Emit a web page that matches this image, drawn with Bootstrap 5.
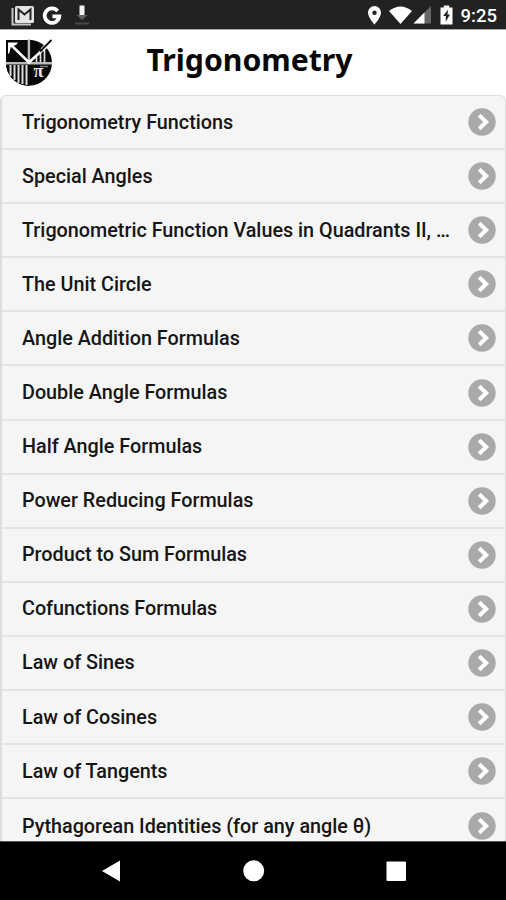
<!DOCTYPE html>
<html lang="en">
<head>
<meta charset="utf-8">
<meta name="viewport" content="width=device-width, initial-scale=1">
<title>Trigonometry</title>
<link href="https://cdn.jsdelivr.net/npm/bootstrap@5.3.0/dist/css/bootstrap.min.css" rel="stylesheet">
<style>
body{font-family:Roboto,"Liberation Sans",sans-serif;color:#161616}
svg{display:block;flex:none}
.screen{height:900px;width:506px}
.status{height:30px;background:#222;border-bottom:1px solid #aaa}
.clock{font-size:18.5px;font-weight:500;line-height:28px;padding:2px 9px 0 5px}
.app-head{height:65px;padding-left:5px}
.app-title{font-family:"Noto Sans",sans-serif;font-weight:700;font-size:30.2px;line-height:40px;padding:0 60px 5px 0;color:#080808}
.topics{border:1px solid #ddd;border-left:2px solid #ddd;border-bottom:0;border-radius:6px 6px 0 0;background:#f5f5f5;min-height:0}
.topics .topic{height:54.1px;padding:0 9px 0 20px;background:#f5f5f5;border:0;border-bottom:2px solid #e4e4e4;border-radius:0;color:#161616;font-size:19.77px;font-weight:500;line-height:28px}
.topic .label{width:434px;padding-top:1px}
.softkeys{height:59px;background:#000;border-top:1px solid #555}
</style>
<script src="https://cdn.jsdelivr.net/npm/bootstrap@5.3.0/dist/js/bootstrap.bundle.min.js"></script>
</head>
<body class="bg-white overflow-hidden">
<svg width="0" height="0" class="position-absolute"><symbol id="go" viewBox="0 0 28 28"><circle cx="14" cy="14" r="13.7" fill="#a9a9a9"/><path d="M11.2 7.2 18.2 14l-7 6.8" fill="none" stroke="#fff" stroke-width="4"/></symbol></svg>
<div class="screen d-flex flex-column overflow-hidden">
  <div class="status d-flex justify-content-between text-white flex-shrink-0">
    <svg width="100" height="29" viewBox="0 0 100 29">
      <path d="M12.5 8v16.5H31" fill="none" stroke="#c4c4c4" stroke-width="2"/>
      <rect x="15" y="6" width="19" height="17" rx="1.5" fill="#e4e4e4"/>
      <path d="M18.5 20V9.5l6 5 6-5V20" fill="none" stroke="#222" stroke-width="2"/>
      <path d="M57.700 11A7.300 7.300 0 1 0 59.300 16.300H52.500" fill="none" stroke="#fff" stroke-width="3.800"/>
      <path d="M79.5 5.500h5V15h-5z" fill="#f4f4f4"/><path d="M76.500 15h11L82 20z" fill="#626262"/><path d="M75 23.500h14" stroke="#484848" stroke-width="2"/>
    </svg>
    <div class="d-flex">
      <svg width="94" height="29" viewBox="363.500 0 94 29">
        <path fill="#fff" fill-rule="evenodd" d="M376 6a6.500 6.500 0 0 0-6.500 6.500c0 5 6.500 12 6.500 12s6.500-7 6.500-12A6.500 6.500 0 0 0 376 6zm0 4.500a2.200 2.200 0 1 1 0 4.400 2.200 2.200 0 0 1 0-4.400z"/>
        <path d="M390.500 11q11.500-9 23 0L402 24z" fill="#fff"/>
        <path d="M415 23.500 432.500 6v17.500z" fill="#666"/><path d="M415 23.500 426 12.500v11z" fill="#fff"/>
        <path d="M442 7.500h3.300V5.500h5.400v2h3.300v17h-12z" fill="#fff"/><path d="M449.500 9.500 444.700 16h2.600v5.500l4.200-7H449z" fill="#222"/>
      </svg>
      <div class="clock">9:25</div>
    </div>
  </div>
  <header class="app-head d-flex align-items-center flex-shrink-0">
    <svg width="48" height="50" viewBox="5 37 48 50">
      <path d="M6 39h22.500v46A23 23 0 0 1 6 62z" fill="#090909"/>
      <circle cx="29" cy="61.800" r="23" fill="#090909"/>
      <g stroke="#ddd" stroke-width="2"><path d="M10.500 64v11M14.500 64v15M18.500 64v18M22.500 64v19M26.500 64v20"/><path d="M36.500 56v5M40.500 52v9M44.500 49v12" stroke-width="1.700"/></g>
      <path d="M28.900 39v23M6 62.200h46" stroke="#bbb" stroke-width="2.400"/>
      <path d="M10 43l19 18.500 13-12" fill="none" stroke="#fff" stroke-width="2.600"/>
      <path d="M8 41.500h10L16 44l-5 1.500-2 7.500-1-1z" fill="#fff"/>
      <path d="M42 49 51.500 39.500" stroke="#fff" stroke-width="4"/><path d="M40 50.500 51.500 39" stroke="#111" stroke-width="2"/>
      <text x="33.500" y="76" font-family="Liberation Serif,serif" font-size="18" font-weight="bold" fill="#e6e6e6">π</text>
      <path d="M40 65.500h8" stroke="#777" stroke-width="1.500"/>
    </svg>
    <h1 class="app-title mb-0 flex-grow-1 text-center">Trigonometry</h1>
  </header>
  <main class="topics list-group list-group-flush flex-grow-1 overflow-hidden flex-nowrap">
    <a class="topic list-group-item d-flex align-items-center justify-content-between flex-shrink-0"><span class="label text-nowrap">Trigonometry Functions</span><svg width="28" height="28"><use href="#go"/></svg></a>
    <a class="topic list-group-item d-flex align-items-center justify-content-between flex-shrink-0"><span class="label text-nowrap">Special Angles</span><svg width="28" height="28"><use href="#go"/></svg></a>
    <a class="topic list-group-item d-flex align-items-center justify-content-between flex-shrink-0"><span class="label text-nowrap">Trigonometric Function Values in Quadrants II, …</span><svg width="28" height="28"><use href="#go"/></svg></a>
    <a class="topic list-group-item d-flex align-items-center justify-content-between flex-shrink-0"><span class="label text-nowrap">The Unit Circle</span><svg width="28" height="28"><use href="#go"/></svg></a>
    <a class="topic list-group-item d-flex align-items-center justify-content-between flex-shrink-0"><span class="label text-nowrap">Angle Addition Formulas</span><svg width="28" height="28"><use href="#go"/></svg></a>
    <a class="topic list-group-item d-flex align-items-center justify-content-between flex-shrink-0"><span class="label text-nowrap">Double Angle Formulas</span><svg width="28" height="28"><use href="#go"/></svg></a>
    <a class="topic list-group-item d-flex align-items-center justify-content-between flex-shrink-0"><span class="label text-nowrap">Half Angle Formulas</span><svg width="28" height="28"><use href="#go"/></svg></a>
    <a class="topic list-group-item d-flex align-items-center justify-content-between flex-shrink-0"><span class="label text-nowrap">Power Reducing Formulas</span><svg width="28" height="28"><use href="#go"/></svg></a>
    <a class="topic list-group-item d-flex align-items-center justify-content-between flex-shrink-0"><span class="label text-nowrap">Product to Sum Formulas</span><svg width="28" height="28"><use href="#go"/></svg></a>
    <a class="topic list-group-item d-flex align-items-center justify-content-between flex-shrink-0"><span class="label text-nowrap">Cofunctions Formulas</span><svg width="28" height="28"><use href="#go"/></svg></a>
    <a class="topic list-group-item d-flex align-items-center justify-content-between flex-shrink-0"><span class="label text-nowrap">Law of Sines</span><svg width="28" height="28"><use href="#go"/></svg></a>
    <a class="topic list-group-item d-flex align-items-center justify-content-between flex-shrink-0"><span class="label text-nowrap">Law of Cosines</span><svg width="28" height="28"><use href="#go"/></svg></a>
    <a class="topic list-group-item d-flex align-items-center justify-content-between flex-shrink-0"><span class="label text-nowrap">Law of Tangents</span><svg width="28" height="28"><use href="#go"/></svg></a>
    <a class="topic list-group-item d-flex align-items-center justify-content-between flex-shrink-0"><span class="label text-nowrap">Pythagorean Identities (for any angle θ)</span><svg width="28" height="28"><use href="#go"/></svg></a>
  </main>
  <nav class="softkeys flex-shrink-0">
    <svg width="506" height="58" viewBox="0 842 506 58" fill="#fff"><path d="M102 871l18-10.500v21z"/><circle cx="253.700" cy="870.800" r="10.500"/><rect x="386.500" y="861.500" width="19.500" height="19.500" rx="1"/></svg>
  </nav>
</div>
</body>
</html>
